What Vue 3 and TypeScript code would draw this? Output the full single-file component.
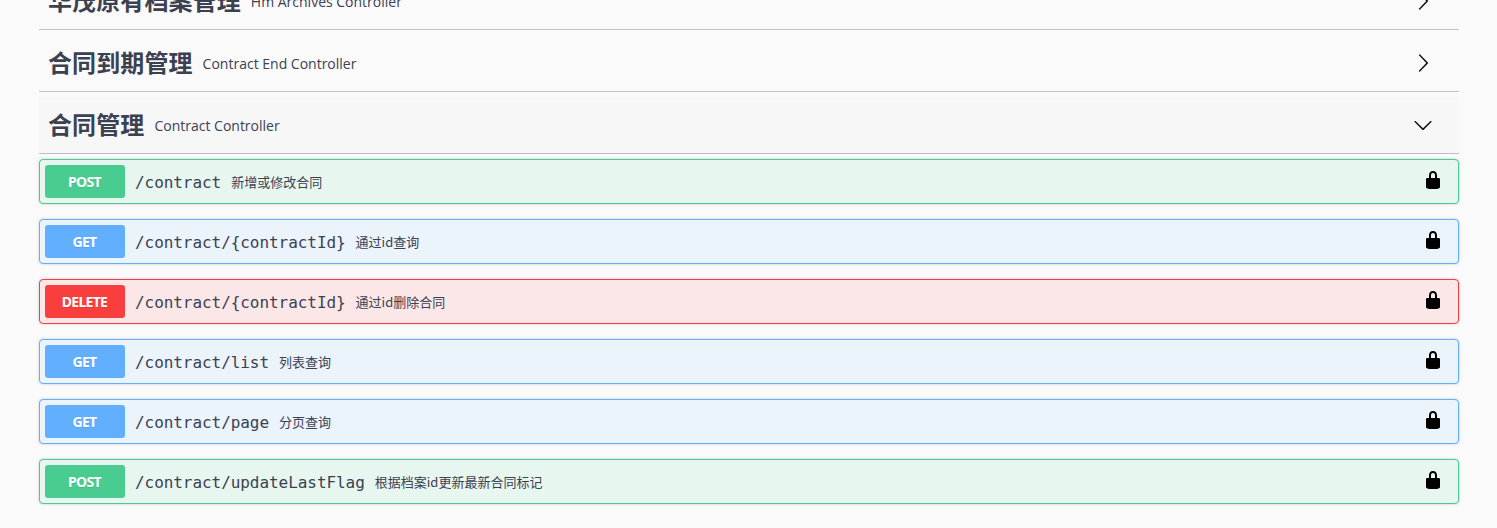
<script setup lang="ts">
interface Tag { name: string; sub: string; open?: boolean }
interface Op { method: "POST" | "GET" | "DELETE"; path: string; desc: string }

const tags: Tag[] = [
  { name: "华茂原有档案管理", sub: "Hm Archives Controller" },
  { name: "合同到期管理", sub: "Contract End Controller" },
  { name: "合同管理", sub: "Contract Controller", open: true },
];
const ops: Op[] = [
  { method: "POST", path: "/contract", desc: "新增或修改合同" },
  { method: "GET", path: "/contract/{contractId}", desc: "通过id查询" },
  { method: "DELETE", path: "/contract/{contractId}", desc: "通过id删除合同" },
  { method: "GET", path: "/contract/list", desc: "列表查询" },
  { method: "GET", path: "/contract/page", desc: "分页查询" },
  { method: "POST", path: "/contract/updateLastFlag", desc: "根据档案id更新最新合同标记" },
];
</script>

<template>
  <div class="page">
    <div class="wrap">
      <div v-for="t in tags" :key="t.name" class="tag" :class="{ open: t.open }">
        <b class="name">{{ t.name }}</b>
        <span class="sub">{{ t.sub }}</span>
        <svg class="arrow" viewBox="0 0 20 20" width="20" height="20">
          <path v-if="t.open" d="M17.418 6.109c.272-.268.709-.268.979 0s.271.701 0 .969l-7.908 7.83c-.27.268-.707.268-.979 0l-7.908-7.83c-.27-.268-.27-.701 0-.969.271-.268.709-.268.979 0L10 13.25l7.418-7.141z" />
          <path v-else d="M13.25 10L6.109 2.58a.697.697 0 0 1 0-.979.68.68 0 0 1 .969 0l7.83 7.908a.697.697 0 0 1 0 .979l-7.83 7.908a.68.68 0 0 1-.969 0 .697.697 0 0 1 0-.979L13.25 10z" />
        </svg>
      </div>
      <div v-for="(o, i) in ops" :key="i" class="op" :class="o.method.toLowerCase()">
        <span class="method">{{ o.method }}</span>
        <span class="path">{{ o.path }}</span>
        <span class="desc">{{ o.desc }}</span>
        <svg class="lock" viewBox="0 0 20 20" width="20" height="20">
          <path d="M15.8 8H14V5.6C14 2.703 12.665 1 10 1 7.334 1 6 2.703 6 5.6V8H4c-.553 0-1 .646-1 1.199V17c0 .549.428 1.139.951 1.307l1.197.387C5.672 18.861 6.55 19 7.1 19h5.8c.549 0 1.428-.139 1.951-.307l1.196-.387c.524-.167.953-.757.953-1.306V9.199C17 8.646 16.352 8 15.8 8zM12 8H8V5.199C8 3.754 8.797 3 10 3c1.203 0 2 .754 2 2.199V8z" />
        </svg>
      </div>
    </div>
  </div>
</template>

<style scoped>
/* 页面已滚动，第一行被顶部裁掉 */
.page { height: 528px; overflow: hidden; background: #fafafa; color: #3b4151;
  font-family: "Open Sans", "Noto Sans CJK SC", sans-serif; }
.wrap { width: 1420px; margin: -27px 0 0 39px; }
.tag { display: flex; align-items: center; height: 57px; box-sizing: border-box; margin-bottom: 5px;
  padding: 10px 20px 10px 9px; border-bottom: 1px solid rgba(59, 65, 81, 0.3); }
.tag.open { background: #f7f7f7; }
.name { font-size: 24px; line-height: 36px; font-weight: 700; letter-spacing: 0.1px; }
.sub { font-size: 14px; margin-left: 10px; }
.arrow { margin-left: auto; margin-right: 6px; fill: #111; }
.op { display: flex; align-items: center; height: 45px; box-sizing: border-box; margin-bottom: 15px;
  padding: 5px; border: 1px solid; border-radius: 4px; box-shadow: 0 0 3px rgba(0, 0, 0, 0.19); }
.op.post { background: #e8f6f0; border-color: #49cc90; }
.op.get { background: #ebf3fb; border-color: #61affe; }
.op.delete { background: #fbe7e7; border-color: #f93e3e; }
.method { width: 80px; height: 33px; flex: none; box-sizing: border-box; padding-right: 1px;
  display: flex; align-items: center; justify-content: center;
  border-radius: 3px; color: #fff; font-size: 14px; font-weight: 700;
  font-family: "Noto Sans", sans-serif; letter-spacing: -0.7px; text-shadow: 0 1px 0 rgba(0, 0, 0, 0.1); }
.post .method { background: #49cc90; }
.get .method { background: #61affe; }
.delete .method { background: #f93e3e; }
.path { margin-left: 10px; padding-top: 2px; font-family: "DejaVu Sans Mono", monospace; font-size: 16px;
  letter-spacing: -0.06px; }
.desc { margin-left: 10px; font-size: 13px; font-family: "Noto Sans CJK SC", sans-serif; }
.lock { margin-left: auto; margin-right: 10px; margin-top: -3px; fill: #000; }
</style>
